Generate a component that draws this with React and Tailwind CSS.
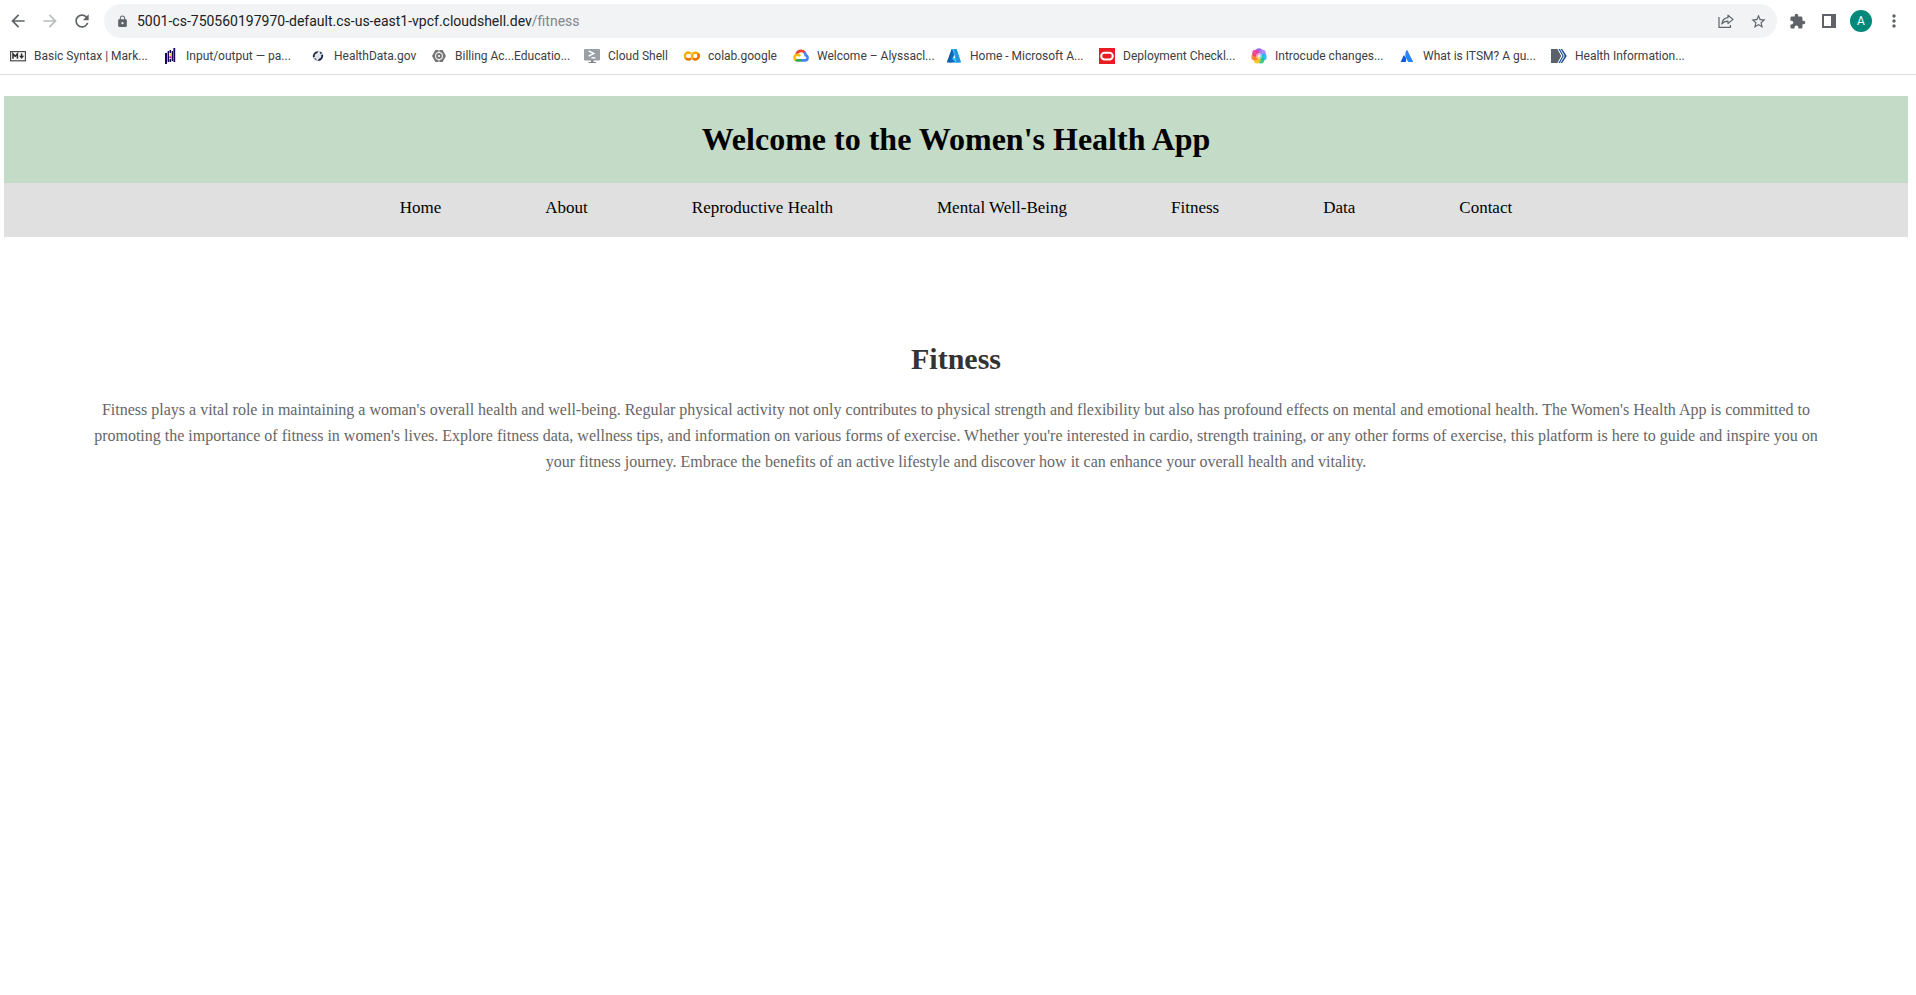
import {
  MdArrowBack,
  MdArrowForward,
  MdRefresh,
  MdLock,
  MdStarBorder,
  MdExtension,
  MdMoreVert,
} from "react-icons/md";

const Svg = ({ children }) => (
  <svg viewBox="0 0 16 16" className="size-4 shrink-0" aria-hidden="true">
    {children}
  </svg>
);

const MarkdownIcon = () => (
  <Svg>
    <rect x="0.6" y="3.6" width="14.8" height="9.2" fill="#fff" stroke="#4a4a4a" strokeWidth="1.2" />
    <path d="M3 10.8V5.8L5.2 8.2 7.4 5.8v5" fill="none" stroke="#333" strokeWidth="1.6" />
    <path d="M11.6 5.4v3.2" stroke="#333" strokeWidth="1.6" />
    <path d="M9 7.8h5.2l-2.6 3.2z" fill="#333" />
  </Svg>
);

const PandasIcon = () => (
  <Svg>
    <g fill="#150458">
      <rect x="3" y="5" width="2" height="11" />
      <rect x="5.600" y="3" width="1.400" height="11" />
      <rect x="7.500" y="2" width="1.600" height="3" />
      <rect x="7.500" y="11" width="1.600" height="3" />
      <rect x="9.700" y="3" width="1.300" height="10" />
      <rect x="11.400" y="0" width="1.800" height="14" />
    </g>
    <rect x="7.300" y="5.600" width="2" height="1.900" fill="#ffca00" />
    <rect x="7.300" y="8.300" width="2" height="1.900" fill="#e70488" />
  </Svg>
);

const HealthDataIcon = () => (
  <Svg>
    <circle cx="8" cy="8" r="5.6" fill="#dfe3ea" />
    <path d="M3 9.5C2.5 6 5 3 8.6 3.2L7 5.2C5 5.6 4.4 7 4.8 9z" fill="#1c2340" />
    <path d="M13 6.4c.6 3.600-2 6.800-5.600 6.400l1.600-2C11 10.400 11.600 9 11.200 7z" fill="#1c2340" />
    <path d="M9.600 3.600l2.600 1.200-1.600 1.800zM4 10.800l1.800-.6 1 2.200z" fill="#2b3356" />
  </Svg>
);

const BillingIcon = () => (
  <Svg>
    <path d="M4.400 2h7.200L15 8l-3.400 6H4.400L1 8z" fill="#757575" />
    <circle cx="8" cy="8" r="3.900" fill="#fff" />
    <circle cx="8" cy="8" r="2.900" fill="#757575" />
    <circle cx="8" cy="8" r="1.100" fill="#fff" />
    <path d="M8 1v3M8 12v3" stroke="#fff" strokeWidth="0.800" />
  </Svg>
);

const CloudShellIcon = () => (
  <Svg>
    <rect x="0" y="1" width="16" height="11.500" rx="1" fill="#9aa0a6" />
    <path d="M7 12h2.400v2H12v1H4.600v-1H7z" fill="#80868b" />
    <path d="M4.600 2.800l5.200 2.700-5.200 2.700" fill="none" stroke="#fff" strokeWidth="1.500" />
    <path d="M7.400 9.800h4" stroke="#fff" strokeWidth="1.400" />
  </Svg>
);

const ColabIcon = () => (
  <Svg>
    <path d="M6.900 5.600a3.500 3.500 0 1 0 0 4.800" fill="none" stroke="#f9ab00" strokeWidth="2.400" />
    <circle cx="11.400" cy="8" r="3.400" fill="none" stroke="#f9ab00" strokeWidth="2.400" />
    <path d="M9 10.400a3.400 3.400 0 0 0 4.800-4.800" fill="none" stroke="#e8710a" strokeWidth="2.400" />
    <path d="M2 10.400a3.500 3.500 0 0 0 4.900 0" fill="none" stroke="#e8710a" strokeWidth="2.400" />
  </Svg>
);

const GoogleCloudIcon = () => (
  <Svg>
    <g fill="none" strokeWidth="2.600">
      <path d="M3.400 6.600C4 4.200 5.800 2.900 8 2.900c1.700 0 2.900.6 3.900 1.900" stroke="#ea4335" />
      <path d="M11.400 4.400c.9.900 1.100 1.600 1.200 2.800 1.300.3 2 1.300 2 2.500 0 1.700-1.200 2.700-2.800 2.700H8" stroke="#4285f4" />
      <path d="M8.200 12.400H4.400c-.8 0-1.500-.3-2-.8" stroke="#34a853" />
      <path d="M2.800 12C.8 10.400 1.100 6.900 4.200 6.700c1.200-.1 2.200.5 2.700 1.500" stroke="#fbbc05" />
    </g>
  </Svg>
);

const AzureIcon = () => (
  <Svg>
    <path d="M5.600 1h4.200L5.400 14.600H1.600c-.5 0-.8-.4-.6-.9z" fill="#0f5ba5" />
    <path d="M9.800 1L7 9.400l4.600 5.200H5l-2-.2L6.600 1z" fill="#0c69bb" />
    <path d="M6.200 1h4.200c.3 0 .5.200.6.500l4 12.300c.1.400-.1.800-.6.800h-4.600l-4-4.300 3.400-.4z" fill="#3ccbf4" />
    <path d="M7.800 1h2.600l4.400 13.600h-4.400z" fill="#2892df" />
  </Svg>
);

const OracleIcon = () => (
  <Svg>
    <rect width="16" height="16" fill="#ea1b22" />
    <rect x="2.200" y="4.700" width="11.600" height="6.800" rx="3.400" fill="none" stroke="#fff" strokeWidth="2" />
  </Svg>
);

const PETALS = [
  ["8", "3.600", "#8a5cf0"],
  ["11.400", "5.200", "#b07cf5"],
  ["12.300", "8.900", "#22b8f0"],
  ["9.900", "12", "#22c58b"],
  ["6.100", "12", "#ffc21a"],
  ["3.700", "8.900", "#ff7a2e"],
  ["4.600", "5.200", "#f2388f"],
];

const PetalsIcon = () => (
  <Svg>
    {PETALS.map(([cx, cy, fill]) => (
      <circle key={fill} cx={cx} cy={cy} r="3.400" fill={fill} fillOpacity="0.9" />
    ))}
    <circle cx="8" cy="8" r="3" fill="#fff" fillOpacity="0.450" />
  </Svg>
);

const AtlassianIcon = () => (
  <Svg>
    <path d="M5.400 7.400c-.2-.3-.5-.2-.7 0L1.800 13.400c-.1.300.1.600.4.600h4.200c.2 0 .3-.1.400-.3.900-1.900.4-4.600-1.400-6.300z" fill="#1558d6" />
    <path d="M7.600 2.200C5.900 4.800 6 7.700 7.100 9.900l2 3.800c.1.200.2.300.4.300h4.100c.3 0 .5-.3.400-.6L8.300 2.200c-.2-.3-.5-.3-.7 0z" fill="#2684ff" />
  </Svg>
);

const HealthInfoIcon = () => (
  <Svg>
    <path d="M0 1h6.500L10.500 8 6.500 15H0z" fill="#5b616b" />
    <path d="M7 1h4.200l4.600 7-4.600 7H7l4.400-7z" fill="#205493" />
    <path d="M7 1.200L10.800 8 7 14.800M9.400 1.200L13.200 8 9.400 14.800" fill="none" stroke="#fff" strokeWidth="0.900" />
  </Svg>
);

const BOOKMARKS = [
  ["Basic Syntax | Mark...", MarkdownIcon, "w-[136px]"],
  ["Input/output — pa...", PandasIcon, "w-[132px]"],
  ["HealthData.gov", HealthDataIcon, "w-[105px]"],
  ["Billing Ac...Educatio...", BillingIcon, "w-[137px]"],
  ["Cloud Shell", CloudShellIcon, "w-[84px]"],
  ["colab.google", ColabIcon, "w-[93px]"],
  ["Welcome – Alyssacl...", GoogleCloudIcon, "w-[137px]"],
  ["Home - Microsoft A...", AzureIcon, "w-[137px]"],
  ["Deployment Checkl...", OracleIcon, "w-[136px]"],
  ["Introcude changes...", PetalsIcon, "w-[132px]"],
  ["What is ITSM? A gu...", AtlassianIcon, "w-[136px]"],
  ["Health Information...", HealthInfoIcon, "w-[136px]"],
];

const NAV = ["Home", "About", "Reproductive Health", "Mental Well-Being", "Fitness", "Data", "Contact"];

function BrowserBar() {
  return (
    <div className="border-b border-[#dadce0] bg-white pb-1 font-[Roboto,sans-serif]">
      <div className="flex h-[42px] items-center pr-3 pl-2 text-[#5f6368]">
        <div className="flex items-center gap-3">
          <button aria-label="Back"><MdArrowBack className="size-5" /></button>
          <button aria-label="Forward" className="text-[#babcbe]"><MdArrowForward className="size-5" /></button>
          <button aria-label="Reload"><MdRefresh className="size-5" /></button>
        </div>
        <div className="ml-3 flex h-[34px] flex-1 items-center rounded-full bg-[#f1f3f4] pr-[10px] pl-3">
          <MdLock className="size-[13px]" />
          <a href="#fitness" className="ml-2 text-sm text-[#202124]">
            5001-cs-750560197970-default.cs-us-east1-vpcf.cloudshell.dev<span className="text-[#80868b]">/fitness</span>
          </a>
          <button aria-label="Share this page" className="ml-auto">
            <svg viewBox="0 0 16 16" className="size-4" fill="none" stroke="currentColor" strokeWidth="1.200">
              <path d="M1 4v10.400h11.400v-2.400" />
              <path d="M10 2.200l5 4.200-5 4.200V8.200C7.200 8.200 5.200 9 3.800 11 4.200 7.600 6.400 5 10 4.600z" strokeLinejoin="round" />
            </svg>
          </button>
          <button aria-label="Bookmark this tab" className="ml-4"><MdStarBorder className="size-[17px]" /></button>
        </div>
        <button aria-label="Extensions" className="ml-3"><MdExtension className="size-[17px]" /></button>
        <button aria-label="Side panel" className="mr-[14px] ml-4">
          <svg viewBox="0 0 14 14" className="size-[14px]">
            <path d="M0 0h14v14H0zM2 2v10h7V2z" fill="currentColor" fillRule="evenodd" />
          </svg>
        </button>
        <button aria-label="Profile" className="size-[22px] rounded-full bg-[#00897b] text-xs text-white">A</button>
        <button aria-label="Menu" className="ml-3"><MdMoreVert className="size-5" /></button>
      </div>
      <nav aria-label="Bookmarks" className="flex h-7 items-center gap-4 pl-[10px] text-xs text-[#3c4043]">
        {BOOKMARKS.map(([label, Icon, width]) => (
          <a key={label} href="#bookmark" className={`flex items-center gap-2 whitespace-nowrap ${width}`}>
            <Icon />
            {label}
          </a>
        ))}
      </nav>
    </div>
  );
}

export default function App() {
  return (
    <div className="min-h-screen bg-white">
      <BrowserBar />
      <div className="mt-[21px] mr-2 ml-1 text-center font-['Liberation_Serif',serif]">
        <header className="bg-[#c4dbc7] py-6">
          <h1 className="text-[32px] leading-[39px] font-bold text-black">Welcome to the Women's Health App</h1>
        </header>
        <nav aria-label="Main" className="flex h-[54px] justify-center gap-[104px] bg-[#e0e0e0] pt-[15px] text-[17px] leading-5 text-black">
          {NAV.map((label) => (
            <a key={label} href="#section">{label}</a>
          ))}
        </nav>
        <main className="px-20 pt-[100px]">
          <h2 className="text-[30px] leading-[44px] font-bold text-[#333]">Fitness</h2>
          <p className="mt-4 text-base leading-[26px] text-[#666]">
            Fitness plays a vital role in maintaining a woman's overall health and well-being. Regular physical activity not only
            contributes to physical strength and flexibility but also has profound effects on mental and emotional health. The
            Women's Health App is committed to promoting the importance of fitness in women's lives. Explore fitness data,
            wellness tips, and information on various forms of exercise. Whether you're interested in cardio, strength training,
            or any other forms of exercise, this platform is here to guide and inspire you on your fitness journey. Embrace the
            benefits of an active lifestyle and discover how it can enhance your overall health and vitality.
          </p>
        </main>
      </div>
    </div>
  );
}
